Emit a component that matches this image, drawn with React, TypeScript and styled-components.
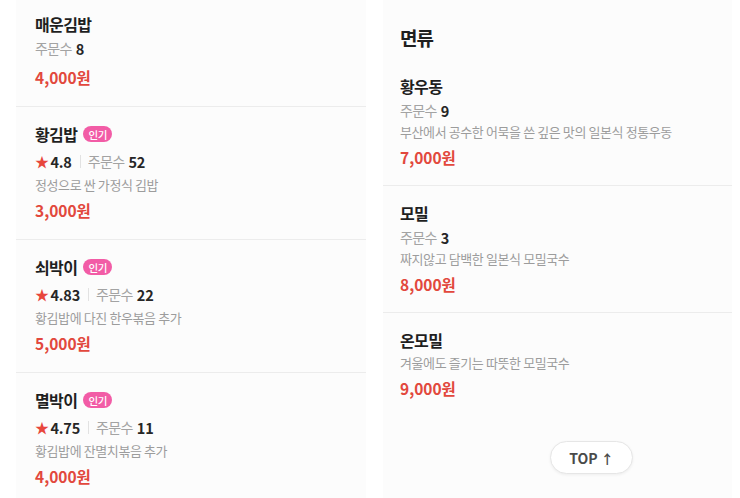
import React from "react";
import styled, { createGlobalStyle } from "styled-components";

interface MenuItem {
  id: number;
  name: string;
  popular?: boolean;
  rating?: string;
  orders?: number;
  desc?: string;
  price: string;
}

const kimbap: MenuItem[] = [
  { id: 1, name: "매운김밥", orders: 8, price: "4,000원" },
  { id: 2, name: "황김밥", popular: true, rating: "4.8", orders: 52, desc: "정성으로 싼 가정식 김밥", price: "3,000원" },
  { id: 3, name: "쇠박이", popular: true, rating: "4.83", orders: 22, desc: "황김밥에 다진 한우볶음 추가", price: "5,000원" },
  { id: 4, name: "멸박이", popular: true, rating: "4.75", orders: 11, desc: "황김밥에 잔멸치볶음 추가", price: "4,000원" },
];

const noodles: MenuItem[] = [
  { id: 5, name: "황우동", orders: 9, desc: "부산에서 공수한 어묵을 쓴 깊은 맛의 일본식 정통우동", price: "7,000원" },
  { id: 6, name: "모밀", orders: 3, desc: "짜지않고 담백한 일본식 모밀국수", price: "8,000원" },
  { id: 7, name: "온모밀", desc: "겨울에도 즐기는 따뜻한 모밀국수", price: "9,000원" },
];

const GlobalStyle = createGlobalStyle`
  html, body {
    margin: 0;
    padding: 0;
    background: #ffffff;
  }
  body {
    font-family: "Noto Sans CJK KR", "Noto Sans", sans-serif;
    color: #222;
  }
`;

const MenuCard: React.FC<{ item: MenuItem }> = ({ item }) => (
  <StyledItem>
    <StyledTitle>
      {item.name}
      {item.popular && <StyledBadge>인기</StyledBadge>}
    </StyledTitle>
    {(item.rating || item.orders !== undefined) && (
      <StyledMeta $rated={!!item.rating}>
        {item.rating && (
          <>
            <StyledStar>★</StyledStar>
            <StyledStrong>{item.rating}</StyledStrong>
            <StyledSep />
          </>
        )}
        <StyledLabel>주문수</StyledLabel>
        <StyledStrong>{item.orders}</StyledStrong>
      </StyledMeta>
    )}
    {item.desc && <StyledDesc $rated={!!item.rating}>{item.desc}</StyledDesc>}
    <StyledPrice $loose={!item.desc}>{item.price}</StyledPrice>
  </StyledItem>
);

const App: React.FC = () => {
  return (
    <>
      <GlobalStyle />
      <StyledPage>
        <StyledPanel>
          <StyledList $offset={-3}>
            {kimbap.map((item) => (
              <MenuCard key={item.id} item={item} />
            ))}
          </StyledList>
        </StyledPanel>
        <StyledPanel>
          <StyledHeading>면류</StyledHeading>
          <StyledList $offset={0}>
            {noodles.map((item) => (
              <MenuCard key={item.id} item={item} />
            ))}
          </StyledList>
          <StyledTopButton>
            TOP <StyledArrow>↑</StyledArrow>
          </StyledTopButton>
        </StyledPanel>
      </StyledPage>
    </>
  );
};

const StyledPage = styled.div`
  display: grid;
  grid-template-columns: 350px 349px;
  column-gap: 17px;
  padding: 0 8px 0 16px;
  height: 498px;
  overflow: hidden;
  background: #ffffff;
`;

const StyledPanel = styled.section`
  position: relative;
  background: #fcfcfc;
  overflow: hidden;
`;

const StyledList = styled.div<{ $offset: number }>`
  display: flex;
  flex-direction: column;
  margin-top: ${(p) => p.$offset}px;
`;

const StyledHeading = styled.h2`
  margin: 0;
  padding: 25px 0 0 17px;
  height: 26px;
  line-height: 26px;
  font-size: 19px;
  font-weight: 700;
  letter-spacing: -1px;
  color: #1f1f1f;
  margin-bottom: 8px;
`;

const StyledItem = styled.article`
  padding: 15px 17px 18px 19px;
  & + & {
    border-top: 1px solid #ececec;
  }
  section:nth-child(2) & {
    padding-left: 17px;
    padding-bottom: 17px;
  }
`;

const StyledTitle = styled.div`
  display: flex;
  align-items: center;
  gap: 6px;
  height: 24px;
  font-size: 16px;
  font-weight: 700;
  letter-spacing: -0.6px;
  color: #1f1f1f;
`;

const StyledBadge = styled.span`
  display: inline-flex;
  align-items: center;
  justify-content: center;
  height: 16px;
  padding: 0 5px;
  border-radius: 8px;
  background: #f25ca6;
  color: #fff;
  font-size: 10.5px;
  font-weight: 500;
  letter-spacing: -0.3px;
`;

const StyledMeta = styled.div<{ $rated: boolean }>`
  display: flex;
  align-items: center;
  height: 22px;
  margin-top: ${(p) => (p.$rated ? 4 : 1)}px;
  font-size: 14px;
  letter-spacing: -0.6px;
`;

const StyledStar = styled.span`
  color: #e8463c;
  font-size: 14px;
  margin-right: 2px;
`;

const StyledStrong = styled.span`
  font-weight: 700;
  color: #262626;
  font-size: 14.5px;
  letter-spacing: -0.2px;
`;

const StyledSep = styled.span`
  width: 1px;
  height: 13px;
  background: #e2e2e2;
  margin: 0 7px 0 8px;
`;

const StyledLabel = styled.span`
  color: #a3a3a3;
  margin-right: 4px;
`;

const StyledDesc = styled.p<{ $rated: boolean }>`
  margin: ${(p) => (p.$rated ? 2 : 0)}px 0 0;
  height: 22px;
  line-height: 22px;
  font-size: 13px;
  letter-spacing: -0.4px;
  color: #9c9c9c;
  white-space: nowrap;
`;

const StyledPrice = styled.div<{ $loose: boolean }>`
  margin-top: ${(p) => (p.$loose ? 7 : 3)}px;
  height: 22px;
  line-height: 22px;
  font-size: 15.5px;
  font-weight: 700;
  letter-spacing: 0;
  color: #e2483d;
`;

const StyledTopButton = styled.button`
  position: absolute;
  left: 167px;
  top: 441px;
  width: 83px;
  height: 33px;
  border: 1px solid #e6e6e6;
  border-radius: 17px;
  background: #ffffff;
  box-shadow: 0 1px 3px rgba(0, 0, 0, 0.06);
  font-family: "Noto Sans CJK KR", "Noto Sans", sans-serif;
  font-size: 14px;
  font-weight: 700;
  color: #4a4a4a;
  cursor: pointer;
`;

const StyledArrow = styled.span`
  font-size: 13px;
`;

export default App;
